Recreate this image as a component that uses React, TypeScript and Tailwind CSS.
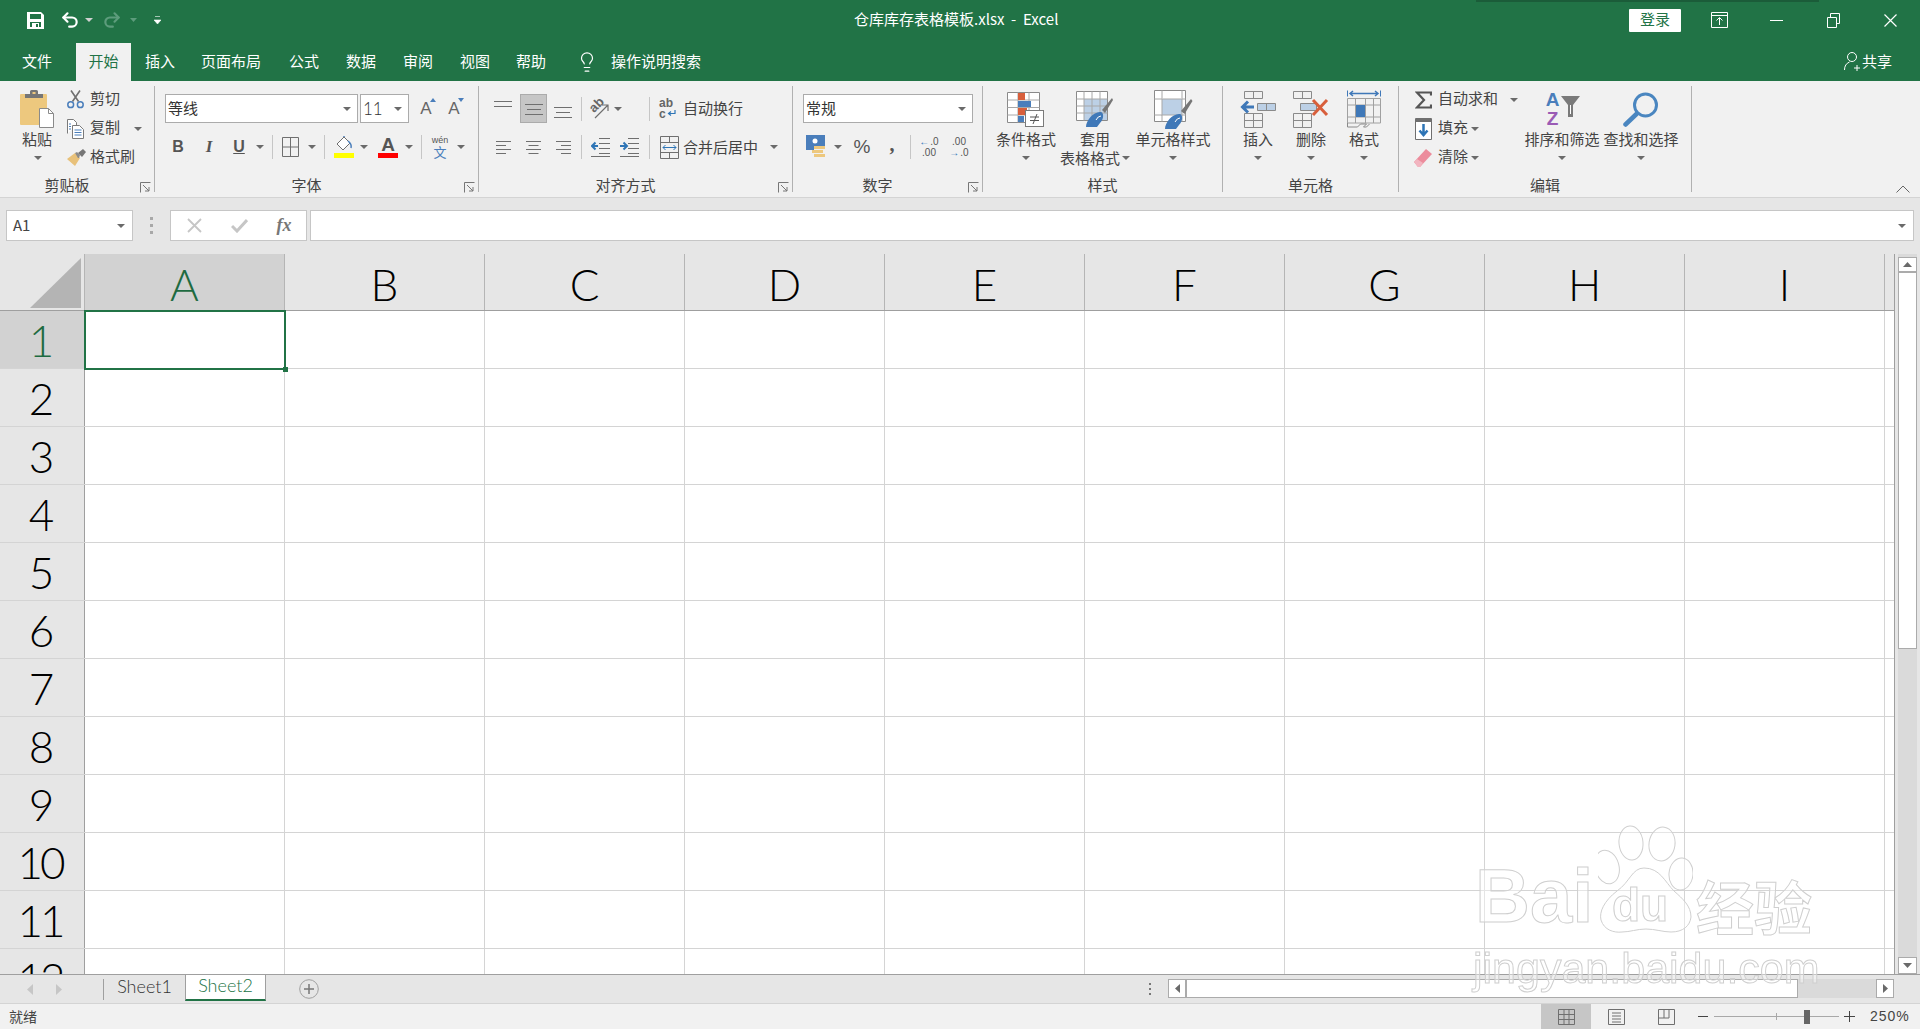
import React from 'react';
import { Lightbulb, Redo2, Undo2 } from 'lucide-react';

// ---- small pieces ----

const Caret = ({ light }: { light?: boolean }) => (
  <svg width="8" height="4" viewBox="0 0 8 4" className="shrink-0">
    <path d="M0 0h8L4 4z" fill={light ? '#d0d0d0' : '#6a6a6a'} />
  </svg>
);

const Slot = ({ className, children }: { className: string; children?: React.ReactNode }) => (
  <div className={`flex shrink-0 items-center justify-center ${className}`}>{children}</div>
);

const Sep = () => <div className="h-[24px] w-px shrink-0 bg-[#c6c6c6]" />;

const GroupLine = () => <div className="my-[5px] w-px shrink-0 bg-[#b1b1b1]" />;

const Launcher = () => (
  <svg width="11" height="11" viewBox="0 0 11 11" className="mt-[5px] mr-[3px]">
    <path d="M.5 10.5V.5h10M3 3l6 6M9 5v4H5" fill="none" stroke="#777" />
  </svg>
);

const Group = ({
  className,
  label,
  launcher,
  children,
}: {
  className: string;
  label: string;
  launcher?: boolean;
  children: React.ReactNode;
}) => (
  <div className={`flex h-[116px] shrink-0 flex-col ${className}`}>
    <div className="h-[94px]">{children}</div>
    <div className="flex h-[20px] items-center text-[15px] leading-[20px] text-[#444]">
      <div className="flex-1 text-center">{label}</div>
      {launcher && <div className="flex w-[20px] justify-end"><Launcher /></div>}
    </div>
  </div>
);

const LargeButton = ({
  className,
  icon,
  label,
  label2,
}: {
  className: string;
  icon: React.ReactNode;
  label: string;
  label2?: string;
}) => (
  <div className={`flex shrink-0 flex-col items-center pt-[9px] text-[15px] leading-[20px] text-[#444] ${className}`}>
    <div className="flex h-[38px] items-center justify-center">{icon}</div>
    <div className="mt-[1px] h-[19px] whitespace-nowrap">{label}</div>
    <div className="flex h-[19px] items-center gap-[2px] whitespace-nowrap">
      {label2}
      <Caret />
    </div>
  </div>
);

const SmallRow = ({
  icon,
  label,
  iconClass,
  caretClass,
  caret,
}: {
  icon: React.ReactNode;
  label: string;
  iconClass: string;
  caretClass?: string;
  caret?: boolean;
}) => (
  <div className="flex h-[29px] items-center text-[15px] text-[#444]">
    <Slot className={iconClass}>{icon}</Slot>
    <span className="mb-[2px] whitespace-nowrap">{label}</span>
    {caret && <div className={caretClass}><Caret /></div>}
  </div>
);

const Select = ({ className, value, labelClass }: { className: string; value: string; labelClass?: string }) => (
  <div className={`flex h-[29px] shrink-0 items-center justify-between border border-[#ababab] bg-white pr-[6px] pl-[2px] text-[15px] text-[#333] ${className}`}>
    <span className={labelClass}>{value}</span>
    <Caret />
  </div>
);

// ---- ribbon icons ----

const SaveIcon = () => (
  <svg width="17" height="17" viewBox="0 0 17 17">
    <path d="M0 0h14l3 3v14H0z" fill="#fff" />
    <rect x="3" y="2" width="11" height="5" fill="#217346" />
    <rect x="3" y="10" width="11" height="5" fill="#217346" />
    <rect x="5" y="11" width="7" height="5" fill="#fff" />
    <rect x="9" y="12" width="2" height="3" fill="#217346" />
  </svg>
);

const PasteIcon = () => (
  <svg width="34" height="38" viewBox="0 0 34 38">
    <rect x="0" y="4" width="27" height="31" rx="1" fill="#edc87e" />
    <path d="M5 8V4h5V1.5Q10 0 11.500 0h5Q18 0 18 1.500V4h5v4z" fill="#767676" />
    <rect x="12.500" y="2" width="3" height="2" fill="#edc87e" />
    <path d="M19.500 18.500h9l5 5v14h-14z" fill="#fff" stroke="#8a8a8a" />
    <path d="M28.500 18.500v5h5" fill="none" stroke="#8a8a8a" />
  </svg>
);

const ScissorsIcon = () => (
  <svg width="17" height="19" viewBox="0 0 17 19" fill="none">
    <path d="M5.500 11.500 13 .5M11.500 11.500 4 .5" stroke="#6f6f6f" strokeWidth="1.600" />
    <circle cx="3.700" cy="14.700" r="2.900" stroke="#4a7ebb" strokeWidth="1.500" />
    <circle cx="13.300" cy="14.700" r="2.900" stroke="#4a7ebb" strokeWidth="1.500" />
  </svg>
);

const CopyIcon = () => (
  <svg width="17" height="20" viewBox="0 0 17 20" fill="none">
    <path d="M.5 14.500V.5h6l3 3v3" stroke="#7a7a7a" fill="#fff" />
    <path d="M5.500 6.500h7l4 4v9h-11z" stroke="#7a7a7a" fill="#fff" />
    <path d="M7.500 11h7M7.500 13.500h7M7.500 16h7M2 5h2M2 7.500h2M2 10h2" stroke="#4a7ebb" />
  </svg>
);

const BrushIcon = () => (
  <svg width="19" height="17" viewBox="0 0 19 17">
    <path d="M0 10 8 4l5 5-5 8z" fill="#e8c17a" />
    <path d="M8 4l2-1 3 3-1 3-1 0z" fill="#8a8a8a" />
    <path d="M11 4l5-4 3 3-4 5z" fill="#767676" />
  </svg>
);

const GrowFont = ({ up }: { up: boolean }) => (
  <div className="relative flex h-[24px] w-[22px] items-center justify-center text-[17px] text-[#666] font-['Liberation_Sans',sans-serif]">
    A
    <svg width="6" height="4" viewBox="0 0 6 4" className="absolute top-[1px] right-[1px]">
      <path d={up ? 'M0 4h6L3 0z' : 'M0 0h6L3 4z'} fill="#4a7ebb" />
    </svg>
  </div>
);

const BorderIcon = () => (
  <svg width="17" height="20" viewBox="0 0 17 20" fill="none" stroke="#6f6f6f">
    <path d="M.5.500h16v19H.5zM8.500.500v19M.5 10h16" />
  </svg>
);

const FillIcon = () => (
  <div className="flex flex-col items-center">
    <svg width="18" height="17" viewBox="0 0 18 17" fill="none">
      <path d="M9 1 2 8l6 6 7-7z" fill="#fff" stroke="#6f6f6f" />
      <path d="M9 1V0M13 5q4 3 3 7" stroke="#4a7ebb" strokeWidth="1.500" />
    </svg>
    <div className="h-[5px] w-[20px] bg-[#ffff00]" />
  </div>
);

const FontColorIcon = () => (
  <div className="flex flex-col items-center">
    <div className="h-[17px] text-[19px] leading-[17px] font-bold text-[#555] font-['Liberation_Sans',sans-serif]">A</div>
    <div className="h-[5px] w-[20px] bg-[#ff0000]" />
  </div>
);

const WenIcon = () => (
  <div className="flex flex-col items-center leading-none">
    <span className="text-[9px] text-[#555] font-['Liberation_Sans',sans-serif]">wén</span>
    <span className="text-[13px] text-[#4a7ebb]">文</span>
  </div>
);

const Lines = ({ rows, className }: { rows: [number, number][]; className?: string }) => (
  <svg width="18" height="16" viewBox="0 0 18 16" className={className}>
    {rows.map(([y, x], i) => (
      <path key={i} d={`M${x} ${y}.5h${18 - x * 2}`} stroke="#6f6f6f" />
    ))}
  </svg>
);

const TextLines = ({ offsets }: { offsets: number[] }) => (
  <svg width="15" height="13" viewBox="0 0 15 13">
    {offsets.map((o, i) => {
      const w = i % 2 === 0 ? 15 : 10;
      const x = o === 0 ? 0 : o === 1 ? (15 - w) / 2 : 15 - w;
      return <path key={i} d={`M${x} ${i * 4 + 0.5}h${w}`} stroke="#6f6f6f" />;
    })}
  </svg>
);

const OrientIcon = () => (
  <div className="relative h-[22px] w-[22px]">
    <span className="absolute top-[-1px] left-[1px] -rotate-45 text-[13px] leading-[16px] font-bold text-[#666] font-['Liberation_Sans',sans-serif]">ab</span>
    <svg width="22" height="22" viewBox="0 0 22 22" fill="none" className="absolute top-0 left-0">
      <path d="M7 20 20 7M14 7h6v6" stroke="#6f6f6f" strokeWidth="1.200" />
    </svg>
  </div>
);

const IndentIcon = ({ more }: { more?: boolean }) => (
  <svg width="19" height="20" viewBox="0 0 19 20" fill="none">
    <path d="M8 1.500h11M8 6.500h11M8 11.500h11M8 16.500h11M0 19.500h19" stroke="#6f6f6f" />
    <path d={more ? 'M0 9h6M3.500 5.500 7 9l-3.500 3.500' : 'M7 9H1M4.500 5.500 1 9l3.500 3.500'} stroke="#2e75b6" strokeWidth="2" />
  </svg>
);

const WrapIcon = () => (
  <div className="flex w-[18px] flex-col text-[12px] leading-[11px] font-bold text-[#666] font-['Liberation_Sans',sans-serif]">
    <span>ab</span>
    <span className="flex items-center">
      c
      <svg width="9" height="8" viewBox="0 0 9 8" fill="none" className="ml-[1px]">
        <path d="M8 0v3.500H2M4 1.500 1.500 3.500 4 5.500" stroke="#2e75b6" strokeWidth="1.200" />
      </svg>
    </span>
  </div>
);

const MergeIcon = () => (
  <svg width="19" height="23" viewBox="0 0 19 23" fill="none">
    <path d="M.5.500h18v22H.5zM.5 6.500h18M.5 16.500h18M9.500.500v6M9.500 16.500v6" stroke="#6f6f6f" />
    <path d="M3 11.500h13M5.500 9 3 11.500 5.500 14M13.500 9l2.500 2.500-2.500 2.500" stroke="#2e75b6" />
  </svg>
);

const CurrencyIcon = () => (
  <svg width="20" height="24" viewBox="0 0 20 24">
    <path d="M0 0h19v12H8v3H0z" fill="#4a7ebb" />
    <circle cx="9" cy="6" r="2.500" fill="#fff" />
    <rect x="8" y="11" width="11" height="3" fill="#edc87e" />
    <rect x="6" y="15" width="11" height="3" fill="#edc87e" />
    <rect x="8" y="19" width="11" height="3" fill="#edc87e" />
  </svg>
);

const DecimalIcon = ({ inc }: { inc?: boolean }) => (
  <div className="flex w-[26px] flex-col items-center text-[10px] leading-[11px] text-[#555] font-['Liberation_Sans',sans-serif]">
    <span className="flex items-center gap-[1px]">
      {inc ? <b className="text-[#2e75b6]">←</b> : null}
      {inc ? '.0' : '.00'}
    </span>
    <span className="flex items-center gap-[1px]">
      {inc ? null : <b className="text-[#2e75b6]">→</b>}
      {inc ? '.00' : '.0'}
    </span>
  </div>
);

const CondFormatIcon = () => (
  <svg width="38" height="35" viewBox="0 0 38 35" fill="none">
    <path d="M.5.500h32v30H.5z" fill="#fff" stroke="#8a8a8a" />
    <path d="M11 .5v30M22 .5v30M.5 8h32M.5 15.500h32M.5 23h32" stroke="#a8a8a8" />
    <rect x="11" y="1" width="7" height="7" fill="#d85f3c" />
    <rect x="11" y="9" width="13" height="6" fill="#4a7ebb" />
    <rect x="11" y="16" width="9" height="7" fill="#d85f3c" />
    <rect x="11" y="24" width="6" height="6" fill="#4a7ebb" />
    <rect x="18.500" y="18.500" width="18" height="16" fill="#fff" stroke="#7a7a7a" />
    <path d="M23 25h9M23 28.500h9M30 22l-4 10" stroke="#555" />
  </svg>
);

const TableFormatIcon = () => (
  <svg width="38" height="36" viewBox="0 0 38 36" fill="none">
    <path d="M.5.500h31v29H.5z" fill="#fff" stroke="#8a8a8a" />
    <rect x="8" y="8" width="23" height="21" fill="#bcd0e6" />
    <path d="M8 .5v29M16 .5v29M24 .5v29M.5 8h31M.5 15h31M.5 22h31" stroke="#a8a8a8" />
    <path d="M26 19 36 7l1 2-8 13z" fill="#767676" />
    <path d="M10 36c0-7 8-16 15-15 3 1 3 7-1 11l-3 4z" fill="#3f78b8" />
    <path d="M20 29q2-4 5-4" stroke="#fff" />
  </svg>
);

const CellStyleIcon = () => (
  <svg width="39" height="39" viewBox="0 0 39 39" fill="none">
    <path d="M.5.500h31v31H.5z" fill="#fff" stroke="#8a8a8a" />
    <rect x="8" y="9" width="20" height="16" fill="#bcd0e6" stroke="#a8a8a8" />
    <path d="M8 .5v8M8 25v6.500M28 .5v8M28 25v6.500M.5 9H8M.5 25H8M28 9h3.500M28 25h3.500" stroke="#a8a8a8" />
    <path d="M27 21 37 9l1.500 2-8 13z" fill="#767676" />
    <path d="M11 39c0-7 8-16 15-15 3 1 3 7-1 11l-3 4z" fill="#3f78b8" />
    <path d="M21 32q2-4 5-4" stroke="#fff" />
  </svg>
);

const InsertIcon = () => (
  <svg width="36" height="37" viewBox="0 0 36 37" fill="none" stroke="#8a8a8a">
    <path d="M4.500.500h18v7h-18zM13.500.500v7M4.500 22.500h18v14h-18zM13.500 22.500v14M4.500 29.500h18" />
    <path d="M17.500 12.500h18v7h-18zM26.500 12.500v7" fill="#bcd0e6" />
    <path d="M14 16H3M8 10.500 2.500 16 8 21.500" stroke="#3f78b8" strokeWidth="3" />
  </svg>
);

const DeleteIcon = () => (
  <svg width="36" height="37" viewBox="0 0 36 37" fill="none" stroke="#8a8a8a">
    <path d="M.5.500h18v7H.5zM9.500.500v7M.5 22.500h18v14H.5zM9.500 22.500v14M.5 29.500h18" />
    <path d="M7.500 12.500h16v7h-16z" fill="#bcd0e6" />
    <path d="M20 9l14 15M34 9 20 24" stroke="#d85f3c" strokeWidth="3" />
  </svg>
);

const CellFormatIcon = () => (
  <svg width="34" height="38" viewBox="0 0 34 38" fill="none" stroke="#a0a0a0">
    <path d="M.5.500v6M33.500.500v6" stroke="#3f78b8" />
    <path d="M3 3.500h28M6 1 3 3.500 6 6M28 1l3 2.500L28 6" stroke="#3f78b8" strokeWidth="1.500" />
    <path d="M.5 8.500h33v24.500H.5zM8.500 8.500V33M18.500 8.500V33M26.500 8.500V33M.5 15h33M.5 27h33" />
    <path d="M.5 33v4h10l3-3h6l-3 3h3l3-3" stroke="#8a8a8a" />
    <rect x="9" y="15" width="9" height="12" fill="#3f78b8" stroke="none" />
  </svg>
);

const SigmaIcon = () => (
  <svg width="17" height="18" viewBox="0 0 17 18" fill="none">
    <path d="M16 4.500V1.500H2L9 9l-7 7.500h14v-3" stroke="#555" strokeWidth="2.200" />
  </svg>
);

const FillDownIcon = () => (
  <svg width="17" height="22" viewBox="0 0 17 22" fill="none">
    <path d="M.5.500h16v21H.5z" fill="#fff" stroke="#6f6f6f" />
    <rect x="1" y="1" width="15" height="3" fill="#6f6f6f" />
    <path d="M8.500 6v11M4.500 12.500l4 4.500 4-4.500" stroke="#2e75b6" strokeWidth="2.500" />
  </svg>
);

const EraserIcon = () => (
  <svg width="18" height="18" viewBox="0 0 18 18">
    <path d="M0 13 12 0l6 5L6 18H4z" fill="#ec8c9c" />
    <path d="M0 13l3-3 6 4-3 4H4z" fill="#f2b5c0" />
  </svg>
);

const SortIcon = () => (
  <div className="flex h-[38px] items-center">
    <div className="flex w-[16px] flex-col items-center text-[19px] leading-[19px] font-bold font-['Liberation_Sans',sans-serif]">
      <span className="text-[#4a7ebb]">A</span>
      <span className="text-[#9a5bb5]">Z</span>
    </div>
    <svg width="19" height="21" viewBox="0 0 19 21" className="mb-[6px]">
      <path d="M0 0h19l-7 9v12H7V9z" fill="#7a7a7a" />
      <path d="M9 9h1v9H9z" fill="#fff" />
    </svg>
  </div>
);

const FindIcon = () => (
  <svg width="36" height="35" viewBox="0 0 36 35" fill="none">
    <circle cx="22.500" cy="13" r="11" stroke="#4a86c0" strokeWidth="3" />
    <path d="M13.500 22 2.500 32.500" stroke="#4a86c0" strokeWidth="4.500" strokeLinecap="round" />
  </svg>
);

// ---- main parts ----

const TitleBar = () => (
  <div className="relative flex h-[40px] shrink-0 items-center bg-[#217346] text-white">
    <Slot className="ml-[24px] w-[22px]"><SaveIcon /></Slot>
    <Slot className="ml-[12px] w-[24px]"><Undo2 size={20} strokeWidth={2.600} /></Slot>
    <Slot className="w-[14px]"><Caret light /></Slot>
    <Slot className="ml-[4px] w-[24px]"><Redo2 size={20} strokeWidth={2.600} className="text-[#5d9c7c]" /></Slot>
    <Slot className="w-[18px]"><svg width="7" height="4" viewBox="0 0 7 4"><path d="M0 0h7L3.500 4z" fill="#5d9c7c" /></svg></Slot>
    <Slot className="ml-[7px] w-[16px]">
      <svg width="7" height="8" viewBox="0 0 7 8"><path d="M1 .5h5M0 4h7L3.500 8z" fill="#fff" stroke="#fff" strokeWidth="0.600" /></svg>
    </Slot>
    <div className="flex-1 pb-[2px] pl-[689px] text-[15px] whitespace-pre">仓库库存表格模板.xlsx  -  Excel</div>
    <div className="flex h-[23px] w-[52px] shrink-0 items-center justify-center rounded-[1px] bg-white pb-[1px] text-[15px] text-[#217346]">登录</div>
    <Slot className="ml-[10px] w-[57px]">
      <svg width="17" height="16" viewBox="0 0 17 16" fill="none" stroke="#fff">
        <path d="M.5.500h16v15H.5zM.5 3.500h16M8.500 13V6M5.500 8.500l3-3 3 3" />
      </svg>
    </Slot>
    <Slot className="w-[57px]"><div className="h-px w-[13px] bg-white" /></Slot>
    <Slot className="w-[57px]">
      <svg width="13" height="15" viewBox="0 0 13 15" fill="none" stroke="#fff">
        <path d="M.5 4.500h9v10h-9zM3.500 4V.5h9v10H10" />
      </svg>
    </Slot>
    <Slot className="w-[57px]">
      <svg width="13" height="13" viewBox="0 0 13 13" fill="none" stroke="#fff" strokeWidth="1.200"><path d="M.5.500l12 12M12.500.500l-12 12" /></svg>
    </Slot>
    <div className="w-[1px]" />
    <div className="absolute top-0 left-[1476px] h-[2px] w-[343px] bg-[#1b5c39]" />
  </div>
);

const TabBar = () => {
  const tabs: [string, string][] = [
    ['插入', 'w-[58px]'],
    ['页面布局', 'w-[84px]'],
    ['公式', 'w-[62px]'],
    ['数据', 'w-[52px]'],
    ['审阅', 'w-[62px]'],
    ['视图', 'w-[52px]'],
    ['帮助', 'w-[60px]'],
  ];
  return (
    <div className="flex h-[41px] shrink-0 items-end bg-[#217346] text-[15px] text-white">
      <div className="flex h-[38px] w-[76px] items-center justify-center pr-[2px] pb-[2px]">文件</div>
      <div className="flex h-[38px] w-[55px] items-center justify-center bg-[#f1f1f1] pb-[2px] text-[#217346]">开始</div>
      {tabs.map(([label, w]) => (
        <div key={label} className={`flex h-[38px] items-center justify-center pb-[2px] ${w}`}>{label}</div>
      ))}
      <div className="ml-[15px] flex h-[38px] w-[22px] items-center justify-center pb-[1px]">
        <Lightbulb size={22} strokeWidth={1.300} />
      </div>
      <div className="flex h-[38px] items-center pb-[2px] pl-[13px]">操作说明搜索</div>
      <div className="ml-auto flex h-[38px] items-center pr-[28px] pb-[2px]">
        <svg width="18" height="20" viewBox="0 0 18 20" fill="none" stroke="#fff" className="mr-[-1px]">
          <circle cx="8" cy="6" r="4.500" />
          <path d="M.5 19q0-6 5-8M13 14v6M10 17h6" />
        </svg>
        <span className="ml-[1px]">共享</span>
      </div>
    </div>
  );
};

const Ribbon = () => (
  <div className="flex h-[117px] shrink-0 border-b border-[#d4d4d4] bg-[#f1f1f1]">
    <Group className="w-[154px]" label="剪贴板" launcher>
      <div className="flex pl-[8px]">
        <div className="flex w-[58px] flex-col items-center pt-[9px] text-[15px] leading-[20px] text-[#444]">
          <div className="h-[38px]"><PasteIcon /></div>
          <div className="mt-[1px] h-[19px]">粘贴</div>
          <div className="flex h-[19px] items-center pl-[2px]"><Caret /></div>
        </div>
        <div className="pt-[4px]">
          <SmallRow iconClass="w-[24px] pr-[6px]" icon={<ScissorsIcon />} label="剪切" />
          <SmallRow iconClass="w-[24px] pr-[6px]" icon={<CopyIcon />} label="复制" caret caretClass="ml-[14px]" />
          <SmallRow iconClass="w-[24px] pr-[4px]" icon={<BrushIcon />} label="格式刷" />
        </div>
      </div>
    </Group>
    <GroupLine />
    <Group className="w-[323px]" label="字体" launcher>
      <div className="pt-[13px] pl-[10px]">
        <div className="flex">
          <Select className="w-[193px]" value="等线" />
          <Select className="ml-[2px] w-[49px]" value="11" labelClass="font-['Lato',sans-serif] text-[17px] font-light" />
          <Slot className="ml-[5px] w-[24px]"><GrowFont up /></Slot>
          <Slot className="ml-[4px] w-[24px]"><GrowFont up={false} /></Slot>
        </div>
        <div className="mt-[10px] flex h-[28px] items-center text-[#555]">
          <Slot className="w-[26px] text-[16px] font-bold font-['Liberation_Sans',sans-serif]">B</Slot>
          <Slot className="w-[36px] text-[17px] font-bold italic font-['Liberation_Serif',serif]">I</Slot>
          <Slot className="w-[24px] text-[16px] font-bold underline font-['Liberation_Sans',sans-serif]">U</Slot>
          <Slot className="w-[18px]"><Caret /></Slot>
          <Slot className="w-[6px]"><Sep /></Slot>
          <Slot className="w-[30px]"><BorderIcon /></Slot>
          <Slot className="w-[14px]"><Caret /></Slot>
          <Slot className="w-[10px]"><Sep /></Slot>
          <Slot className="w-[30px]"><FillIcon /></Slot>
          <Slot className="w-[10px]"><Caret /></Slot>
          <Slot className="w-[38px]"><FontColorIcon /></Slot>
          <Slot className="w-[4px]"><Caret /></Slot>
          <Slot className="w-[20px]"><Sep /></Slot>
          <Slot className="w-[18px]"><WenIcon /></Slot>
          <Slot className="w-[24px]"><Caret /></Slot>
        </div>
      </div>
    </Group>
    <GroupLine />
    <Group className="w-[313px]" label="对齐方式" launcher>
      <div className="pt-[13px] pl-[10px]">
        <div className="flex h-[29px] items-center">
          <Slot className="w-[28px]"><Lines className="mb-[6px]" rows={[[3, 0], [8, 0]]} /></Slot>
          <Slot className="w-[33px]">
            <div className="flex h-[29px] w-[27px] items-center justify-center border border-[#ababab] bg-[#c6c6c6]"><Lines rows={[[3, 0], [8, 2], [13, 0]]} /></div>
          </Slot>
          <Slot className="w-[26px]"><Lines className="mt-[6px]" rows={[[3, 0], [8, 2], [13, 0]]} /></Slot>
          <Slot className="w-[10px]"><Sep /></Slot>
          <Slot className="w-[26px]"><OrientIcon /></Slot>
          <Slot className="w-[12px]"><Caret /></Slot>
          <div className="w-[21px]" />
          <Slot className="w-[8px]"><Sep /></Slot>
          <Slot className="w-[30px]"><WrapIcon /></Slot>
          <span className="text-[15px] text-[#444]">自动换行</span>
        </div>
        <div className="mt-[10px] flex h-[28px] items-center">
          <Slot className="w-[28px]"><TextLines offsets={[0, 0, 0, 0]} /></Slot>
          <Slot className="w-[32px]"><TextLines offsets={[1, 1, 1, 1]} /></Slot>
          <Slot className="w-[28px]"><TextLines offsets={[2, 2, 2, 2]} /></Slot>
          <Slot className="w-[8px]"><Sep /></Slot>
          <Slot className="w-[30px]"><IndentIcon /></Slot>
          <Slot className="w-[28px]"><IndentIcon more /></Slot>
          <Slot className="w-[12px]"><Sep /></Slot>
          <Slot className="w-[28px]"><MergeIcon /></Slot>
          <span className="w-[75px] text-[15px] whitespace-nowrap text-[#444]">合并后居中</span>
          <Slot className="w-[32px]"><Caret /></Slot>
        </div>
      </div>
    </Group>
    <GroupLine />
    <Group className="w-[189px]" label="数字" launcher>
      <div className="pt-[13px] pl-[10px]">
        <Select className="w-[170px]" value="常规" />
        <div className="mt-[10px] flex h-[28px] items-center text-[#555]">
          <Slot className="w-[26px]"><CurrencyIcon /></Slot>
          <Slot className="w-[18px]"><Caret /></Slot>
          <Slot className="w-[30px] text-[19px] font-['Liberation_Sans',sans-serif]">%</Slot>
          <Slot className="w-[30px] pb-[6px] text-[20px] font-bold font-['Liberation_Serif',serif]">,</Slot>
          <Slot className="w-[6px]"><Sep /></Slot>
          <Slot className="w-[32px]"><DecimalIcon inc /></Slot>
          <Slot className="w-[28px]"><DecimalIcon /></Slot>
        </div>
      </div>
    </Group>
    <GroupLine />
    <Group className="w-[239px]" label="样式">
      <div className="flex pl-[7px]">
        <LargeButton className="w-[72px]" icon={<CondFormatIcon />} label="条件格式" />
        <LargeButton className="w-[66px]" icon={<TableFormatIcon />} label="套用" label2="表格格式" />
        <LargeButton className="w-[90px]" icon={<CellStyleIcon />} label="单元格样式" />
      </div>
    </Group>
    <GroupLine />
    <Group className="w-[175px]" label="单元格">
      <div className="flex pl-[9px]">
        <LargeButton className="w-[52px]" icon={<InsertIcon />} label="插入" />
        <LargeButton className="w-[54px]" icon={<DeleteIcon />} label="删除" />
        <LargeButton className="w-[52px]" icon={<CellFormatIcon />} label="格式" />
      </div>
    </Group>
    <GroupLine />
    <Group className="w-[292px]" label="编辑">
      <div className="flex pl-[9px]">
        <div className="w-[113px] pt-[4px]">
          <SmallRow iconClass="w-[30px]" icon={<SigmaIcon />} label="自动求和" caret caretClass="ml-[12px]" />
          <SmallRow iconClass="w-[30px]" icon={<FillDownIcon />} label="填充" caret caretClass="ml-[3px]" />
          <SmallRow iconClass="w-[30px]" icon={<EraserIcon />} label="清除" caret caretClass="ml-[3px]" />
        </div>
        <LargeButton className="w-[82px]" icon={<SortIcon />} label="排序和筛选" />
        <LargeButton className="w-[76px]" icon={<FindIcon />} label="查找和选择" />
      </div>
    </Group>
    <GroupLine />
    <div className="flex flex-1 items-end justify-end pr-[10px] pb-[4px]">
      <svg width="14" height="8" viewBox="0 0 14 8" fill="none" stroke="#666"><path d="M.5 7.500 7 1l6.500 6.500" /></svg>
    </div>
  </div>
);

const FormulaBar = () => (
  <div className="flex h-[56px] shrink-0 items-center bg-[#e6e6e6] pb-[1px] pl-[6px]">
    <div className="flex h-[31px] w-[127px] items-center justify-between border border-[#c6c6c6] bg-white pr-[7px] pl-[6px] text-[15px] text-[#444]">
      A1
      <Caret />
    </div>
    <Slot className="w-[37px]">
      <div className="flex flex-col gap-[4px]">
        <div className="h-[3px] w-[3px] bg-[#a8a8a8]" />
        <div className="h-[3px] w-[3px] bg-[#a8a8a8]" />
        <div className="h-[3px] w-[3px] bg-[#a8a8a8]" />
      </div>
    </Slot>
    <div className="flex h-[31px] w-[137px] items-center border border-[#c6c6c6] bg-white">
      <Slot className="w-[46px]">
        <svg width="15" height="15" viewBox="0 0 15 15" fill="none" stroke="#c6c6c6" strokeWidth="1.800"><path d="M1 1l13 13M14 1 1 14" /></svg>
      </Slot>
      <Slot className="w-[44px]">
        <svg width="17" height="14" viewBox="0 0 17 14" fill="none" stroke="#c6c6c6" strokeWidth="3"><path d="M1 7l5 5L16 1" /></svg>
      </Slot>
      <Slot className="w-[46px] text-[18px] font-bold italic text-[#777] font-['Liberation_Serif',serif]">fx</Slot>
    </div>
    <div className="ml-[3px] flex h-[31px] w-[1604px] items-center justify-end border border-[#c6c6c6] bg-white pr-[7px]">
      <Caret />
    </div>
  </div>
);

const headerText = "font-['Lato','Liberation_Sans',sans-serif] text-[44px] leading-none font-light";

const Grid = () => {
  const cols = ['A', 'B', 'C', 'D', 'E', 'F', 'G', 'H', 'I'];
  const rows = [1, 2, 3, 4, 5, 6, 7, 8, 9, 10, 11, 12];
  return (
    <div className="relative flex h-[720px] shrink-0">
      <div className="relative h-[720px] w-[1895px] shrink-0 overflow-hidden border-r border-[#9f9f9f] bg-white">
        <div className="flex h-[57px] border-b border-[#9f9f9f] bg-[#e6e6e6] text-black">
          <div className="flex w-[85px] shrink-0 items-end justify-end border-r border-[#b5b5b5] pr-[3px] pb-[2px]">
            <svg width="51" height="50" viewBox="0 0 51 50"><path d="M51 0v50H0z" fill="#b4b4b4" /></svg>
          </div>
          {cols.map((c, i) => (
            <div
              key={c}
              className={`flex w-[200px] shrink-0 items-center justify-center border-r border-[#b5b5b5] pt-[3px] ${headerText} ${i === 0 ? 'bg-[#d2d2d2] text-[#1e6b41]' : ''}`}
            >
              {c}
            </div>
          ))}
        </div>
        {rows.map((r) => (
          <div key={r} className="flex h-[58px] border-b border-[#d4d4d4]">
            <div
              className={`flex w-[85px] shrink-0 items-center justify-center border-r border-[#9f9f9f] pt-[1px] pr-[4px] tracking-[-3px] ${headerText} ${r === 1 ? 'bg-[#d2d2d2] text-[#1e6b41]' : 'bg-[#e6e6e6] text-black'}`}
            >
              {r}
            </div>
            {cols.map((c) => (
              <div key={c} className="w-[200px] shrink-0 border-r border-[#d4d4d4]" />
            ))}
          </div>
        ))}
        {/* selected cell */}
        <div className="absolute top-[56px] left-[84px] h-[60px] w-[202px] border-2 border-[#217346]">
          <div className="absolute right-[-4px] bottom-[-4px] h-[5px] w-[5px] bg-[#217346]" />
        </div>
      </div>
      {/* vertical scrollbar */}
      <div className="flex flex-1 bg-[#e6e6e6] px-[3px]">
        <div className="flex w-[19px] flex-col bg-[#dadada]">
          <div className="mt-[3px] flex h-[15px] items-center justify-center border border-[#ababab] bg-white">
            <svg width="9" height="5" viewBox="0 0 9 5"><path d="M0 5h9L4.500 0z" fill="#6a6a6a" /></svg>
          </div>
          <div className="h-[377px] border border-[#ababab] bg-white" />
          <div className="mt-auto flex h-[17px] items-center justify-center border border-[#ababab] bg-white">
            <svg width="9" height="5" viewBox="0 0 9 5"><path d="M0 0h9L4.500 5z" fill="#6a6a6a" /></svg>
          </div>
        </div>
      </div>
    </div>
  );
};

const SheetBar = () => (
  <div className="flex h-[29px] shrink-0 border-t border-[#9f9f9f] bg-[#e6e6e6]">
    <Slot className="ml-[20px] w-[20px]">
      <svg width="6" height="11" viewBox="0 0 6 11"><path d="M6 0v11L0 5.500z" fill="#c6c6c6" /></svg>
    </Slot>
    <Slot className="ml-[9px] w-[20px]">
      <svg width="6" height="11" viewBox="0 0 6 11"><path d="M0 0v11l6-5.500z" fill="#c6c6c6" /></svg>
    </Slot>
    <div className="mt-[4px] ml-[34px] h-[21px] w-px bg-[#9f9f9f]" />
    <div className="flex h-[22px] w-[81px] items-center justify-center text-[18px] text-[#333] font-['Lato',sans-serif] font-light">Sheet1</div>
    <div className="flex h-[26px] w-[81px] items-center justify-center border-x border-b-[2px] border-x-[#9f9f9f] border-b-[#217346] bg-white pb-[4px] text-[18px] text-[#217346] font-['Lato',sans-serif] font-light">Sheet2</div>
    <Slot className="ml-[33px] h-[28px] w-[20px]">
      <svg width="20" height="20" viewBox="0 0 20 20" fill="none">
        <circle cx="10" cy="10" r="9.300" stroke="#9f9f9f" />
        <path d="M10 5v10M5 10h10" stroke="#777" strokeWidth="1.500" />
      </svg>
    </Slot>
    <div className="ml-[826px] flex h-[28px] w-[10px] flex-col items-center justify-center gap-[3px]">
      <div className="h-[2px] w-[2px] bg-[#777]" />
      <div className="h-[2px] w-[2px] bg-[#777]" />
      <div className="h-[2px] w-[2px] bg-[#777]" />
    </div>
    <div className="mt-[4px] ml-[13px] flex h-[19px] w-[726px] bg-[#dadada]">
      <div className="flex w-[18px] items-center justify-center border border-[#ababab] bg-white">
        <svg width="5" height="9" viewBox="0 0 5 9"><path d="M5 0v9L0 4.500z" fill="#6a6a6a" /></svg>
      </div>
      <div className="w-[612px] border border-[#ababab] bg-white" />
      <div className="ml-auto flex w-[18px] items-center justify-center border border-[#ababab] bg-white">
        <svg width="5" height="9" viewBox="0 0 5 9"><path d="M0 0v9l5-4.500z" fill="#6a6a6a" /></svg>
      </div>
    </div>
  </div>
);

const StatusBar = () => (
  <div className="flex h-[26px] shrink-0 items-center border-t border-[#d4d4d4] bg-[#f1f1f1] text-[14px] text-[#444]">
    <span className="ml-[9px]">就绪</span>
    <Slot className="ml-auto h-[25px] w-[50px] bg-[#c6c6c6]">
      <svg width="17" height="16" viewBox="0 0 17 16" fill="none" stroke="#6f6f6f"><path d="M.5.500h16v15H.5zM6 .5v15M11 .5v15M.5 5.500h16M.5 10.500h16" /></svg>
    </Slot>
    <Slot className="w-[50px]">
      <svg width="17" height="16" viewBox="0 0 17 16" fill="none" stroke="#6f6f6f"><path d="M.5.500h16v15H.5zM4 4h9M4 7h9M4 10h9M4 13h9" /></svg>
    </Slot>
    <Slot className="w-[50px]">
      <svg width="17" height="16" viewBox="0 0 17 16" fill="none" stroke="#6f6f6f"><path d="M.5.500h16v15H.5zM6 .5V9H11V.5M.5 9H6" /></svg>
    </Slot>
    <div className="ml-[7px] h-px w-[10px] bg-[#444]" />
    <div className="relative ml-[6px] flex h-[16px] w-[125px] items-center">
      <div className="h-px w-full bg-[#a8a8a8]" />
      <div className="absolute left-[62px] h-[7px] w-px bg-[#a8a8a8]" />
      <div className="absolute left-[90px] h-[14px] w-[6px] bg-[#666]" />
    </div>
    <svg width="11" height="11" viewBox="0 0 11 11" className="ml-[5px]" fill="none" stroke="#444"><path d="M5.500 0v11M0 5.500h11" /></svg>
    <span className="ml-[15px] w-[50px] tracking-[1px] font-['Liberation_Sans',sans-serif]">250%</span>
  </div>
);

// Baidu watermark, lies over the sheet
const Watermark = () => {
  const outline = '[-webkit-text-stroke:1px_#cfcfcf] text-[#ffffff66]';
  return (
    <div className="pointer-events-none absolute top-[825px] left-[1470px] h-[170px] w-[350px] blur-[0.5px]">
      <div className={`absolute top-[26px] left-[5px] text-[76px] leading-[90px] font-bold font-['Liberation_Sans',sans-serif] ${outline}`}>Bai</div>
      <svg width="95" height="115" viewBox="0 0 95 115" className="absolute top-0 left-[128px]" fill="#ffffff66" stroke="#cfcfcf">
        <ellipse cx="9" cy="42" rx="12" ry="17" transform="rotate(-15 9 42)" />
        <ellipse cx="33" cy="18" rx="12" ry="17" transform="rotate(-5 33 18)" />
        <ellipse cx="64" cy="19" rx="13" ry="17" transform="rotate(8 64 19)" />
        <ellipse cx="83" cy="49" rx="12" ry="16" transform="rotate(5 83 49)" />
        <path d="M46 43c-12 0-14 14-27 23-13 10-18 21-16 29 3 10 13 13 21 12 8 0 15-3 24-3s17 3 25 3c12 0 19-6 20-15 0-11-8-18-17-26-9-9-14-23-30-23z" />
      </svg>
      <div className={`absolute top-[50px] left-[142px] text-[46px] leading-[60px] font-bold font-['Liberation_Sans',sans-serif] ${outline}`}>du</div>
      <div className={`absolute top-[42px] left-[226px] text-[58px] leading-[76px] font-bold ${outline}`}>经验</div>
      <div className={`absolute top-[118px] left-[3px] text-[43px] leading-[50px] whitespace-nowrap font-['Liberation_Sans',sans-serif] ${outline}`}>jingyan.baidu.com</div>
    </div>
  );
};

export default function App() {
  return (
    <div className="relative flex h-[1029px] w-[1920px] flex-col overflow-hidden bg-white font-['Noto_Sans_CJK_SC','Noto_Sans',sans-serif]">
      <TitleBar />
      <TabBar />
      <Ribbon />
      <FormulaBar />
      <Grid />
      <SheetBar />
      <StatusBar />
      <Watermark />
    </div>
  );
}
